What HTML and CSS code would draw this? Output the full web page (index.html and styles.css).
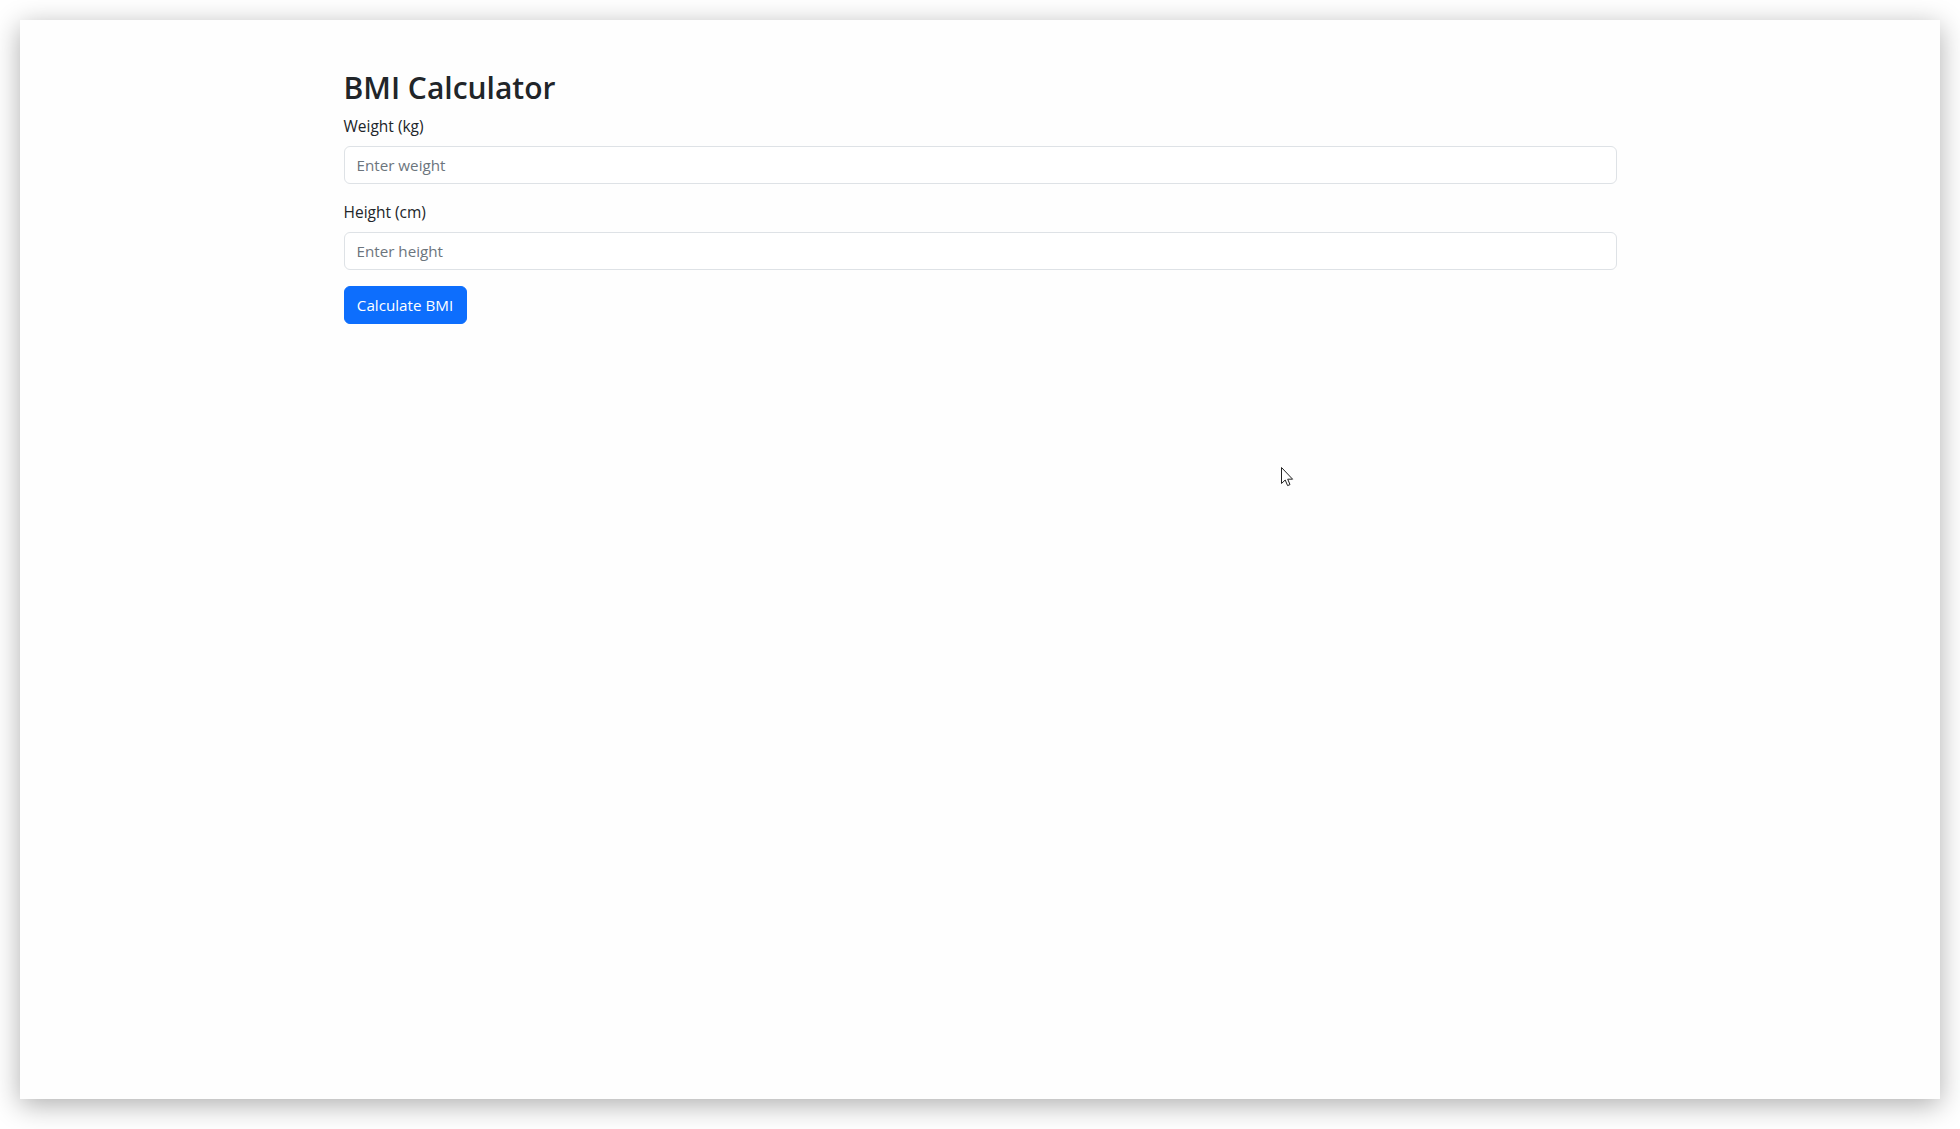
FILE: index.html
```html
<!DOCTYPE html>
<html lang="en">
<head>
<meta charset="utf-8">
<title>BMI Calculator</title>
<link rel="stylesheet" href="styles.css">
</head>
<body>
<div class="window">
  <div class="container">
    <h2 class="title">BMI Calculator</h2>
    <div class="group">
      <label class="label" for="weight">Weight (kg)</label>
      <input class="control" id="weight" type="text" placeholder="Enter weight">
    </div>
    <div class="group">
      <label class="label" for="height">Height (cm)</label>
      <input class="control" id="height" type="text" placeholder="Enter height">
    </div>
    <button class="btn" type="button">Calculate BMI</button>
  </div>
  <svg class="cursor" width="14" height="20" viewBox="0 0 14 20">
    <path d="M0.5 0.5 L0.5 16.5 L4.2 13 L6.6 18.6 L9 17.6 L6.7 12.2 L11.6 12.2 Z" fill="#fff" stroke="#222" stroke-width="1" stroke-linejoin="miter"/>
  </svg>
</div>
</body>
</html>
```

FILE: styles.css
```css
html, body {
  margin: 0;
  padding: 0;
  background: #ffffff;
  overflow: hidden;
}

body {
  width: 1960px;
  height: 1129px;
  font-family: "Open Sans", "Noto Sans", sans-serif;
  color: #212529;
}

.window {
  position: relative;
  margin: 20px;
  width: 1920px;
  height: 1079px;
  background: #fefefe;
  box-shadow: 0 6px 26px rgba(0, 0, 0, 0.32);
}

.container {
  width: 1273px;
  margin: 0 auto;
  padding-top: 49px;
}

.title {
  margin: 0 0 7px 0;
  font-size: 30px;
  font-weight: 600;
  line-height: 38px;
  color: #212529;
}

.group {
  margin-bottom: 16px;
}

.label {
  display: block;
  margin-bottom: 8px;
  font-size: 15.5px;
  line-height: 24px;
}

.control {
  display: block;
  box-sizing: border-box;
  width: 100%;
  height: 38px;
  padding: 6px 12px;
  border: 1px solid #dee2e6;
  border-radius: 6px;
  background: #fff;
  font-family: inherit;
  font-size: 15.2px;
  color: #212529;
  outline: none;
}

.control::placeholder {
  color: #6c757d;
  opacity: 1;
}

.btn {
  display: inline-block;
  box-sizing: border-box;
  height: 38px;
  width: 123px;
  padding: 0 12px;
  border: 1px solid #0d6efd;
  border-radius: 6px;
  background: #0d6efd;
  color: #fff;
  font-family: inherit;
  font-size: 15.2px;
  line-height: 36px;
  cursor: pointer;
}

.cursor {
  position: absolute;
  left: 1261px;
  top: 447px;
}
```
